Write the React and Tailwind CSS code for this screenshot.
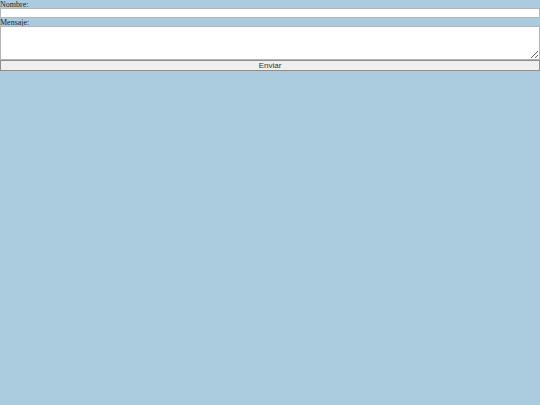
import React from 'react';

// Formulario de contacto simple
function App() {
  return (
    <div className="min-h-screen w-full bg-[#abcbdf] font-['Liberation_Serif',serif] text-[8px] leading-[9px] text-[#222]">
      <form className="flex flex-col" onSubmit={(e) => e.preventDefault()}>
        <label htmlFor="nombre" className="block h-[8px]">Nombre:</label>
        <input
          id="nombre"
          type="text"
          className="block h-[10px] w-full border border-[#b4b4b4] bg-white"
        />
        <label htmlFor="mensaje" className="block h-[8px]">Mensaje:</label>
        <textarea
          id="mensaje"
          className="block h-[34px] w-full resize-y border border-[#b4b4b4] bg-white"
        />
        <button
          type="submit"
          className="block h-[11px] w-full border border-[#8e8e8e] bg-[#efefef] font-['Liberation_Sans',sans-serif] text-[8px] leading-[9px] text-[#333]"
        >
          Enviar
        </button>
      </form>
    </div>
  );
}

export default App;
